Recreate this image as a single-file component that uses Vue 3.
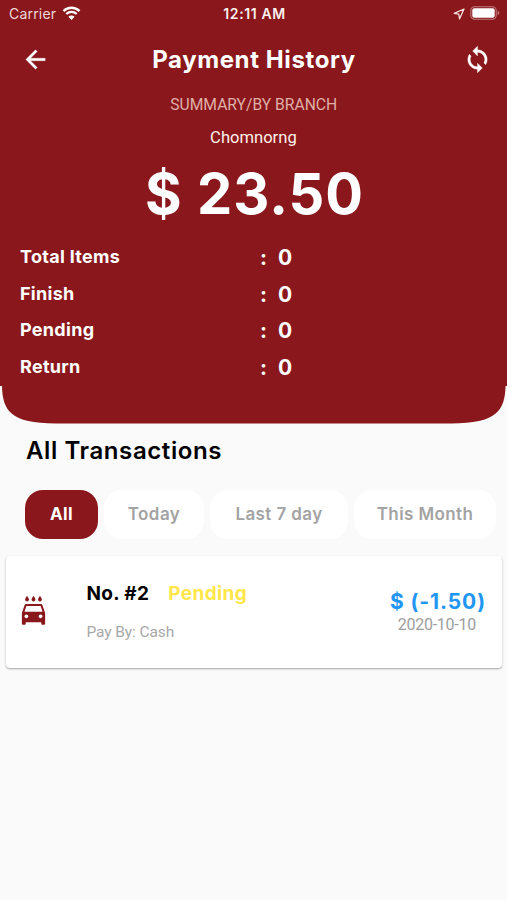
<template>
  <div class="screen">
    <header class="summary">
      <!-- Barra de estado -->
      <div class="status">
        <div class="status-side">
          <span class="carrier">Carrier</span>
          <svg class="wifi" viewBox="0 0 18 14">
            <path d="M1 5.1a11.4 11.4 0 0 1 16 0" />
            <path d="M3.8 8a7.4 7.4 0 0 1 10.4 0" />
            <path class="dot" d="M9 13.9 5.9 10.7a4.4 4.4 0 0 1 6.2 0z" />
          </svg>
        </div>
        <span class="clock">12:11 AM</span>
        <div class="status-side right">
          <svg class="location" viewBox="0 0 12 12">
            <path d="M11 1 1.2 5.3l4.5.9.9 4.6z" />
          </svg>
          <svg class="battery" viewBox="0 0 30 14">
            <rect class="case" x=".8" y=".8" width="25.4" height="12.4" rx="3.6" />
            <rect class="charge" x="2.3" y="2.3" width="22.4" height="9.4" rx="2" />
            <path class="tip" d="M27.6 4.8c2.2.6 2.2 3.8 0 4.4z" />
          </svg>
        </div>
      </div>

      <div class="appbar">
        <button class="icon-btn" type="button" aria-label="Back">
          <svg viewBox="0 0 24 24">
            <path d="M20 11H7.83l5.59-5.59L12 4l-8 8 8 8 1.41-1.41L7.83 13H20v-2z" />
          </svg>
        </button>
        <h1>Payment History</h1>
        <button class="icon-btn" type="button" aria-label="Refresh">
          <svg viewBox="0 0 24 24">
            <path
              d="M12 4V1L8 5l4 4V6c3.31 0 6 2.69 6 6 0 1.01-.25 1.97-.7 2.8l1.46 1.46C19.54 15.03 20 13.57 20 12c0-4.42-3.58-8-8-8zm0 14c-3.31 0-6-2.69-6-6 0-1.01.25-1.97.7-2.8L5.24 7.74C4.46 8.97 4 10.43 4 12c0 4.42 3.58 8 8 8v3l4-4-4-4v3z" />
          </svg>
        </button>
      </div>

      <p class="caption"><span>SUMMARY/BY BRANCH</span></p>
      <p class="branch"><span>Chomnorng</span></p>
      <p class="total">$ 23.50</p>

      <dl class="stats">
        <div v-for="stat in stats" :key="stat.label" class="stat">
          <dt>{{ stat.label }}</dt>
          <dd><span class="colon">:</span>{{ stat.value }}</dd>
        </div>
      </dl>
    </header>
    <svg class="curve" viewBox="0 0 507 37.5" preserveAspectRatio="none">
      <path d="M2 0C2.5 24 10 37.5 56 37.5H451C497 37.5 505 24 505.5 0Z" />
    </svg>

    <main>
      <h2>All Transactions</h2>

      <div class="filters">
        <button v-for="filter in filters" :key="filter.id" type="button" class="chip"
          :class="[filter.id, { active: selected === filter.id }]" @click="selected = filter.id">
          {{ filter.label }}
        </button>
      </div>

      <article v-for="item in transactions" :key="item.no" class="card">
        <svg class="car" viewBox="0 0 24 24">
          <path
            d="M17 5c.83 0 1.5-.67 1.5-1.5 0-1-1.5-2.7-1.5-2.7s-1.5 1.7-1.5 2.7c0 .83.67 1.5 1.5 1.5zm-5 0c.83 0 1.5-.67 1.5-1.5 0-1-1.5-2.7-1.5-2.7s-1.5 1.7-1.5 2.7c0 .83.67 1.5 1.5 1.5zM7 5c.83 0 1.5-.67 1.5-1.5C8.5 2.5 7 .8 7 .8S5.500 2.500 5.500 3.500C5.500 4.330 6.170 5 7 5zm11.92 3.01C18.72 7.42 18.16 7 17.5 7h-11c-.66 0-1.21.42-1.42 1.01L3 14v8c0 .55.45 1 1 1h1c.55 0 1-.45 1-1v-1h12v1c0 .55.45 1 1 1h1c.55 0 1-.45 1-1v-8l-2.08-5.99zM6.5 18c-.83 0-1.5-.67-1.5-1.5S5.67 15 6.5 15s1.5.67 1.5 1.5S7.33 18 6.5 18zm11 0c-.83 0-1.5-.67-1.5-1.5s.67-1.5 1.5-1.5 1.5.67 1.5 1.5-.67 1.5-1.5 1.5zM5 13l1.5-4.5h11L19 13H5z" />
        </svg>
        <div class="details">
          <div class="heading">
            <span class="number">No. #{{ item.no }}</span>
            <span class="state">{{ item.state }}</span>
          </div>
          <div class="method">Pay By: {{ item.method }}</div>
        </div>
        <div class="money">
          <div class="amount">$ ({{ item.amount }})</div>
          <div class="date">{{ item.date }}</div>
        </div>
      </article>
    </main>
  </div>
</template>

<script setup>
import { ref } from 'vue'

const stats = [
  { label: 'Total Items', value: 0 },
  { label: 'Finish', value: 0 },
  { label: 'Pending', value: 0 },
  { label: 'Return', value: 0 }
]

const filters = [
  { id: 'all', label: 'All' },
  { id: 'today', label: 'Today' },
  { id: 'week', label: 'Last 7 day' },
  { id: 'month', label: 'This Month' }
]

const selected = ref('all')

const transactions = [
  { no: 2, state: 'Pending', method: 'Cash', amount: '-1.50', date: '2020-10-10' }
]
</script>

<style>
body {
  margin: 0;
  background: #fafafa;
}
</style>

<style scoped>
.screen {
  min-height: 900px;
  overflow: hidden;
  background: #fafafa;
  color: #000;
  font-family: Inter, "Liberation Sans", sans-serif;
}

h1,
h2,
p,
dl,
dd {
  margin: 0;
}

button {
  padding: 0;
  border: 0;
  background: none;
  font-family: inherit;
  cursor: pointer;
}

svg {
  display: block;
}

.summary {
  height: 386px;
  background: #89171b;
  color: #fff;
}

.status {
  display: grid;
  grid-template-columns: 1fr auto 1fr;
  align-items: center;
  height: 27px;
  padding: 0 7px 0 9px;
  box-sizing: border-box;
}

.status-side {
  display: flex;
  align-items: center;
  gap: 6px;
}

.status-side.right {
  justify-content: flex-end;
  gap: 5px;
}

.carrier {
  color: #f0d8d8;
  font-size: 14px;
  letter-spacing: 0.2px;
}

.clock {
  color: #fbeeee;
  font-size: 14px;
  font-weight: 600;
  letter-spacing: 0.6px;
}

.wifi {
  width: 19px;
  height: 14px;
  margin-top: -1px;
  fill: none;
  stroke: #fff;
  stroke-width: 2.4;
}

.wifi .dot {
  fill: #fff;
  stroke: none;
}

.location {
  width: 12px;
  height: 12px;
  fill: none;
  stroke: #f6e0e0;
  stroke-width: 1.3;
  stroke-linejoin: round;
}

.battery {
  width: 30px;
  height: 14px;
  margin-top: -1px;
}

.case {
  fill: none;
  stroke: #bd7b7d;
  stroke-width: 1.1;
}

.charge {
  fill: #fff;
}

.tip {
  fill: #bd7b7d;
}

.appbar {
  display: grid;
  grid-template-columns: 29px 1fr 29px;
  align-items: center;
  height: 65px;
  padding: 0 15px 0 21px;
}

.icon-btn {
  width: 29px;
  height: 29px;
}

.icon-btn svg {
  width: 29px;
  height: 29px;
  fill: #fff;
  stroke: #fff;
  stroke-width: 0.3;
}

h1 {
  padding-right: 5px;
  font-size: 24px;
  font-weight: 700;
  letter-spacing: 0.6px;
  text-align: center;
  white-space: nowrap;
}

.caption,
.branch,
.total {
  text-align: center;
}

.caption {
  color: #e0afa9;
  font: 17px/24px Roboto, sans-serif;
}

.caption span {
  display: inline-block;
  transform: scaleX(0.92);
}

.branch {
  margin-top: 9px;
  color: #fff0ea;
  font: 17px/24px Roboto, sans-serif;
}

.branch span {
  display: inline-block;
  transform: scaleX(0.975);
}

.total {
  height: 91px;
  padding-left: 2px;
  font-size: 56px;
  font-weight: 700;
  letter-spacing: 1px;
  line-height: 91px;
}

.stats {
  padding: 4px 20px 0;
}

.stat {
  display: grid;
  grid-template-columns: 240px 1fr;
  height: 36.7px;
}

.stat dt {
  font-size: 18px;
  font-weight: 700;
  letter-spacing: 0.3px;
  line-height: 25px;
}

.stat dd {
  font-size: 21px;
  font-weight: 700;
  line-height: 28px;
}

.colon {
  display: inline-block;
  width: 18px;
}

.curve {
  width: 100%;
  height: 37.5px;
  fill: #89171b;
}

h2 {
  margin: 12px 0 0 26px;
  font-size: 24px;
  font-weight: 600;
  letter-spacing: 0.6px;
  line-height: 30px;
}

.filters {
  display: flex;
  gap: 6px;
  margin: 24px 0 0 25px;
}

.chip {
  flex: none;
  height: 49px;
  border-radius: 18px;
  background: #fff;
  color: #a3a3a3;
  font-size: 17px;
  font-weight: 600;
  letter-spacing: 0.4px;
}

.chip.active {
  background: #89171b;
  color: #fff;
}

.chip.all {
  width: 73px;
  font-weight: 700;
}

.chip.today {
  width: 100px;
}

.chip.week {
  width: 138px;
}

.chip.month {
  width: 142px;
}

.card {
  display: flex;
  height: 112px;
  margin: 17px 5px 0 6px;
  border-radius: 4px;
  background: #fff;
  box-shadow: 0 1px 2px rgba(0, 0, 0, 0.35);
}

.car {
  flex: none;
  width: 31px;
  height: 31px;
  margin: 39.5px 0 0 12px;
  fill: #89171b;
}

.details {
  flex: 1;
  padding: 25px 0 0 37.5px;
}

.heading {
  display: flex;
  gap: 19px;
  font-size: 19px;
  font-weight: 700;
  letter-spacing: 0.35px;
  line-height: 25px;
}

.state {
  color: #ffe74a;
}

.method {
  margin-top: 14px;
  color: #a8a8a8;
  font: 15.5px/24px Roboto, sans-serif;
  letter-spacing: -0.1px;
}

.money {
  display: flex;
  flex-direction: column;
  align-items: flex-end;
  padding: 32px 16px 0 0;
}

.amount {
  color: #2196f3;
  font-size: 21px;
  font-weight: 700;
  letter-spacing: 0.9px;
  line-height: 28px;
}

.date {
  padding-right: 10px;
  color: #9e9e9e;
  font: 16px/18px Roboto, sans-serif;
  letter-spacing: -0.25px;
}
</style>
